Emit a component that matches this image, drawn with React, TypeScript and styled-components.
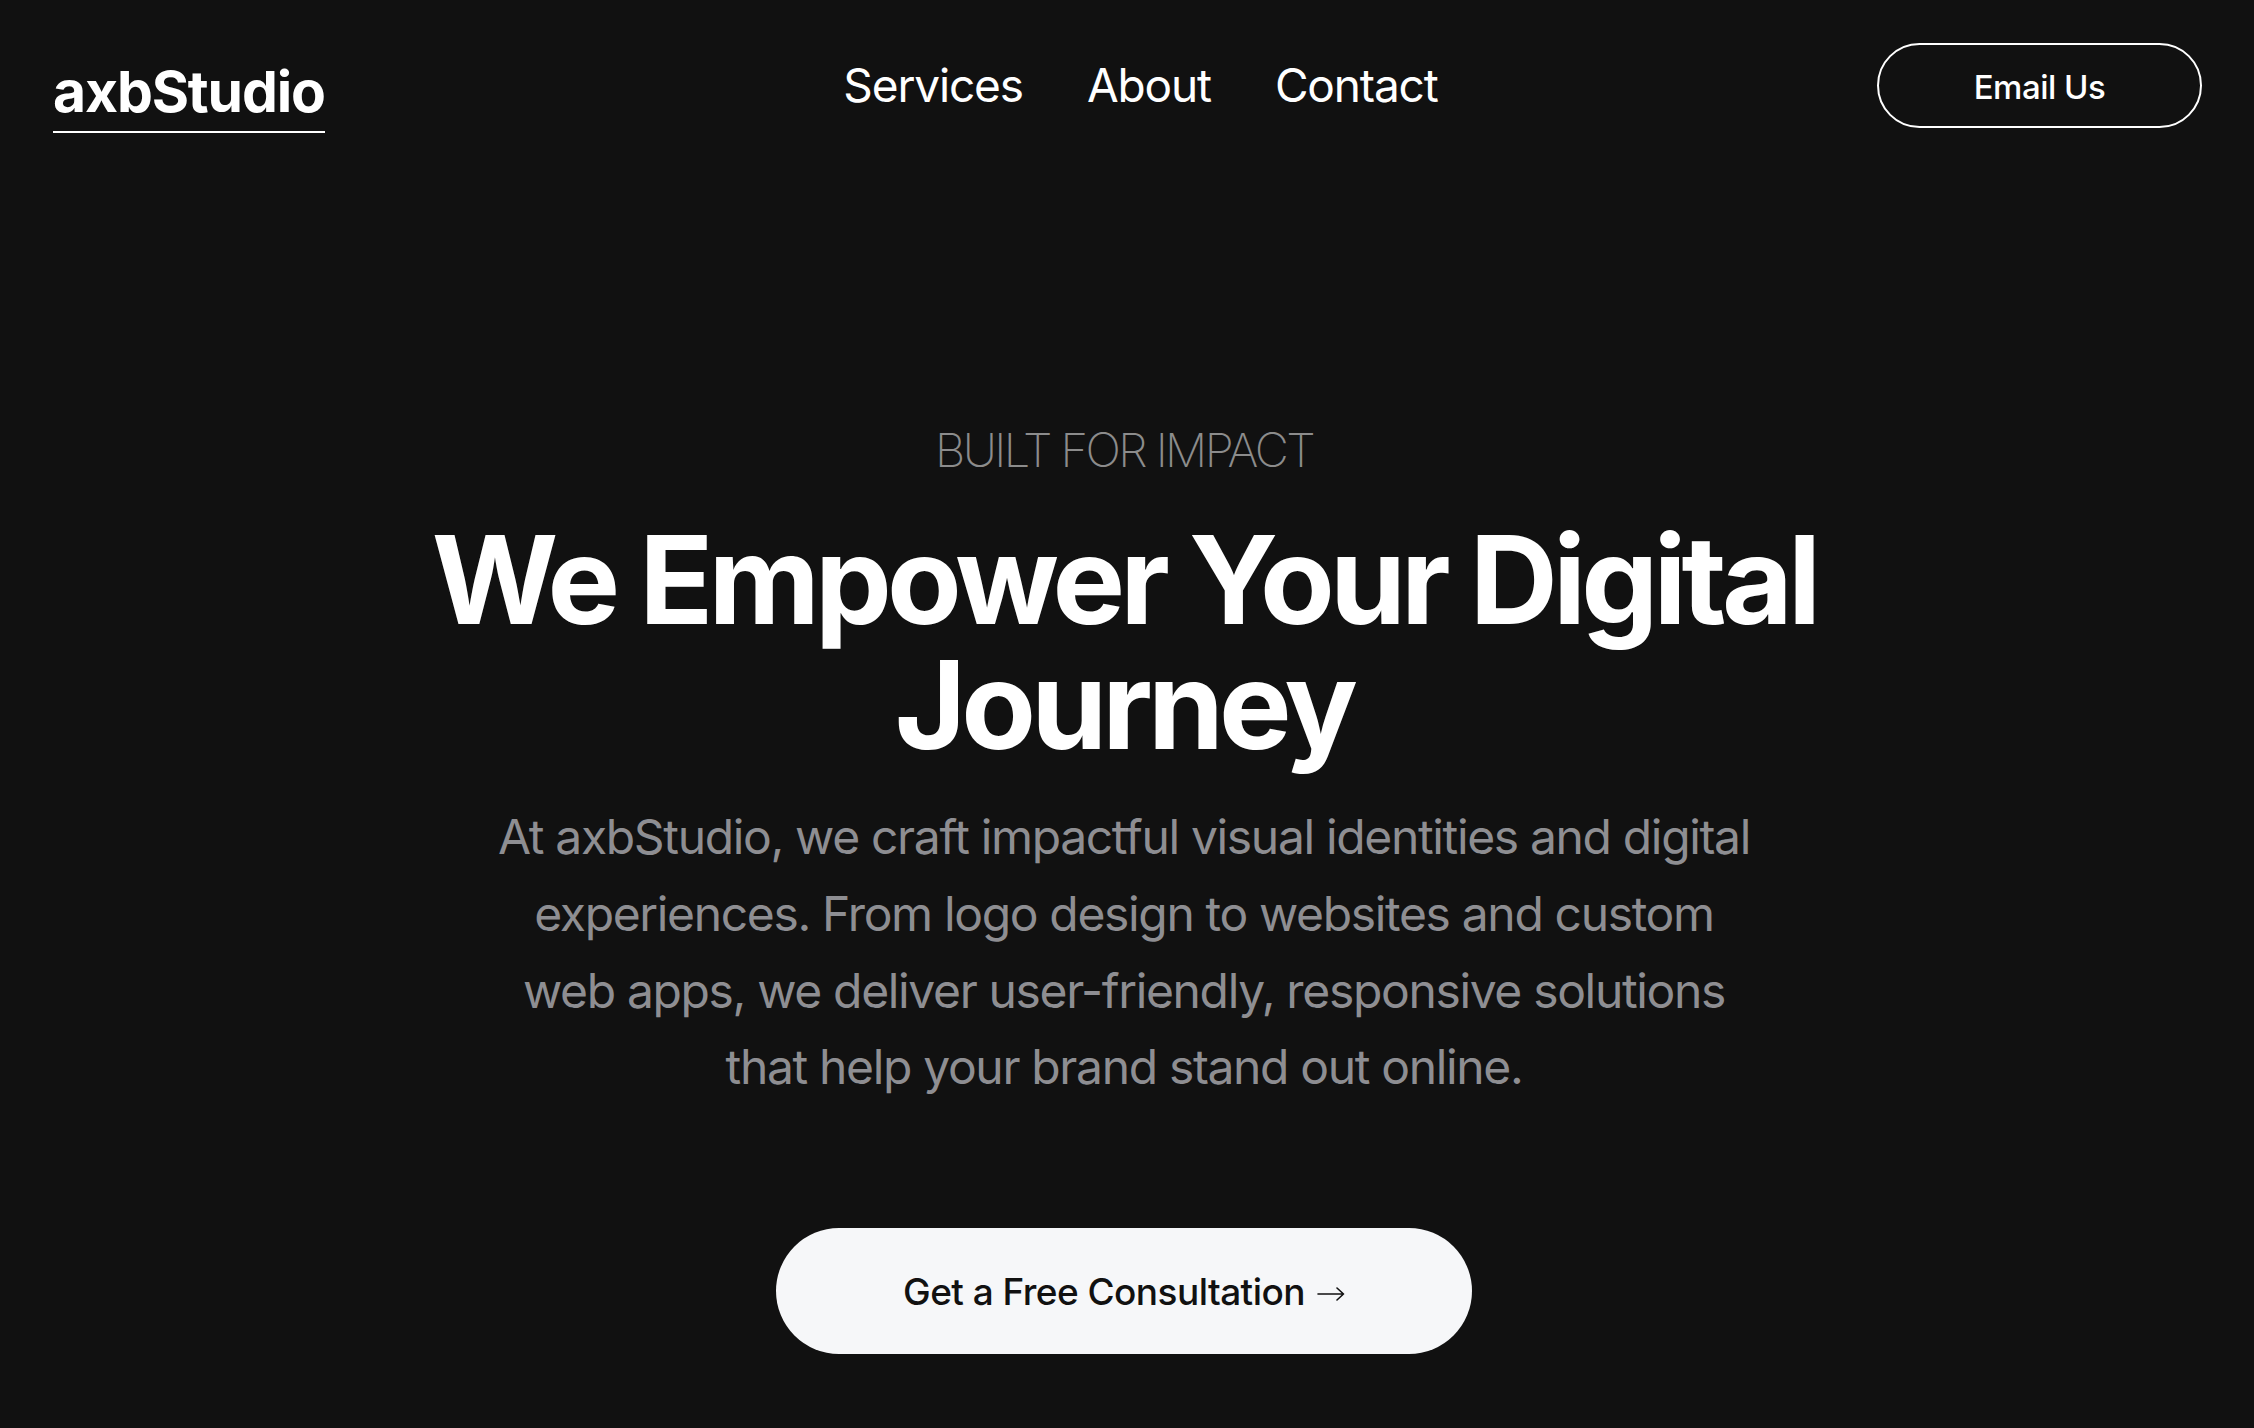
import React from "react";
import styled, { createGlobalStyle } from "styled-components";

const Global = createGlobalStyle`
  html, body { margin: 0; padding: 0; background: #111111; }
  body { font-family: Inter, "Noto Sans", "Liberation Sans", sans-serif; color: #ffffff; }
  * { box-sizing: border-box; }
`;

const Page = styled.div`
  min-height: 1428px;
  background: #111111;
  display: flex;
  flex-direction: column;
`;

const Header = styled.header`
  display: grid;
  grid-template-columns: 1fr auto 1fr;
  align-items: start;
  padding: 43px 52px 0 53px;
`;

const Logo = styled.a`
  justify-self: start;
  margin-top: 20px;
  font-size: 57px;
  line-height: 57px;
  font-weight: 700;
  letter-spacing: -0.02em;
  color: #ffffff;
  text-decoration: none;
  padding-bottom: 11px;
  border-bottom: 2px solid #ffffff;
`;

const Nav = styled.nav`
  display: flex;
  gap: 64px;
  margin-top: 15px;
  padding-left: 26px;
`;

const NavLink = styled.a`
  font-size: 46px;
  line-height: 55px;
  font-weight: 400;
  letter-spacing: -0.025em;
  color: #ffffff;
  text-decoration: none;
`;

const OutlineButton = styled.button`
  justify-self: end;
  height: 85px;
  width: 325px;
  border: 2px solid #ffffff;
  border-radius: 999px;
  background: transparent;
  color: #ffffff;
  font-family: inherit;
  font-size: 33px;
  font-weight: 500;
  letter-spacing: -0.015em;
  display: flex;
  align-items: center;
  justify-content: center;
  padding: 3px 0 0;
`;

const Hero = styled.main`
  display: flex;
  flex-direction: column;
  align-items: center;
  text-align: center;
  padding: 288px 6px 0 0;
`;

const Tagline = styled.p`
  margin: 0;
  font-size: 47px;
  line-height: 58px;
  font-weight: 200;
  letter-spacing: -0.055em;
  color: #8c8c8c;
`;

const Title = styled.h1`
  margin: 38px 0 0;
  font-size: 122px;
  line-height: 125px;
  font-weight: 700;
  letter-spacing: -0.04em;
  color: #ffffff;
`;

const Lead = styled.p`
  margin: 32px 0 0;
  font-size: 48px;
  line-height: 76.8px;
  font-weight: 400;
  letter-spacing: -0.028em;
  color: #8e8e92;
`;

const Cta = styled.button`
  margin-top: 122px;
  width: 696px;
  height: 126px;
  border: none;
  border-radius: 999px;
  background: #f6f7f9;
  color: #111111;
  font-family: inherit;
  font-size: 37px;
  font-weight: 500;
  letter-spacing: -0.015em;
  display: flex;
  align-items: center;
  justify-content: center;
  gap: 12px;
`;

const Arrow = styled.svg`
  width: 28px;
  height: 14px;
  margin-top: 6px;
`;

export default function App() {
  return (
    <Page>
      <Global />
      <Header>
        <Logo href="#">axbStudio</Logo>
        <Nav>
          <NavLink href="#">Services</NavLink>
          <NavLink href="#">About</NavLink>
          <NavLink href="#">Contact</NavLink>
        </Nav>
        <OutlineButton>Email Us</OutlineButton>
      </Header>
      <Hero>
        <Tagline>BUILT FOR IMPACT</Tagline>
        <Title>
          We Empower Your Digital
          <br />
          Journey
        </Title>
        <Lead>
          At axbStudio, we craft impactful visual identities and digital
          <br />
          experiences. From logo design to websites and custom
          <br />
          web apps, we deliver user-friendly, responsive solutions
          <br />
          that help your brand stand out online.
        </Lead>
        <Cta>
          Get a Free Consultation
          <Arrow viewBox="0 0 28 14" fill="none" stroke="#111111" strokeWidth="1.6" strokeLinecap="round" strokeLinejoin="round">
            <path d="M1 7h25.5M20 1l6.5 6-6.5 6" />
          </Arrow>
        </Cta>
      </Hero>
    </Page>
  );
}
